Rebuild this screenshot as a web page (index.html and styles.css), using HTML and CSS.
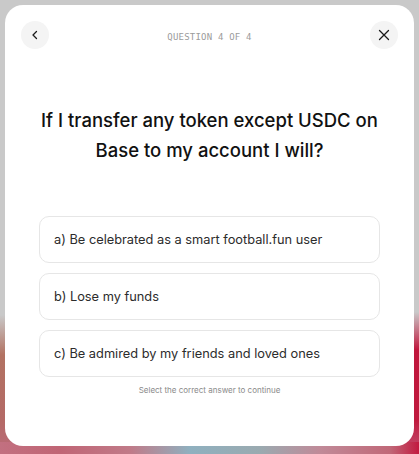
FILE: index.html
```html
<!DOCTYPE html>
<html>
<head>
<meta charset="utf-8">
<link rel="stylesheet" href="styles.css">
</head>
<body>
<div class="card">
  <div class="header">
    <button class="icon-btn" aria-label="Back">
      <svg width="12" height="12" viewBox="0 0 12 12"><path d="M7.5 2.5 L4 6 L7.5 9.5" fill="none" stroke="#1a1a1a" stroke-width="1.3" stroke-linecap="round" stroke-linejoin="round"/></svg>
    </button>
    <div class="step">QUESTION 4 OF 4</div>
    <button class="icon-btn" aria-label="Close">
      <svg width="14" height="14" viewBox="0 0 14 14"><path d="M2.5 2.5 L11.5 11.5 M11.5 2.5 L2.5 11.5" fill="none" stroke="#1a1a1a" stroke-width="1.3" stroke-linecap="round"/></svg>
    </button>
  </div>
  <h1 class="question">If I transfer any token except USDC on Base to my account I will?</h1>
  <div class="options">
    <div class="option">a) Be celebrated as a smart football.fun user</div>
    <div class="option">b) Lose my funds</div>
    <div class="option">c) Be admired by my friends and loved ones</div>
  </div>
  <p class="hint">Select the correct answer to continue</p>
</div>
</body>
</html>
```
FILE: styles.css
```css
html, body {
  margin: 0;
  height: 100%;
}
body {
  padding: 5px;
  box-sizing: border-box;
  background:
    linear-gradient(to right, #c27080 0px, #c06575 60px, #c07a88 130px, #8fb0bf 190px, #9aaab0 260px, #c08a98 320px, #c06878 390px, #c21a40 419px) left bottom / 100% 12px no-repeat,
    linear-gradient(to bottom, #c9c9c9 0px, #c9c9c9 315px, #b27262 355px, #b46a66 420px, #bb6a7a 454px) left top / 30px 100% no-repeat,
    linear-gradient(to bottom, #c9c9c9 0px, #c9c9c9 312px, #c0163c 350px, #c01a3e 420px, #c25070 454px) right top / 30px 100% no-repeat,
    #c9c9c9;
  font-family: Inter, "Noto Sans", sans-serif;
}
.card {
  background: #fff;
  border-radius: 18px;
  height: 441px;
  box-sizing: border-box;
  padding: 16px;
  display: flex;
  flex-direction: column;
}
.header {
  display: flex;
  align-items: center;
  justify-content: space-between;
  height: 28px;
}
.icon-btn {
  width: 28px;
  height: 28px;
  border-radius: 50%;
  border: none;
  background: #f4f4f4;
  padding: 0;
  display: flex;
  align-items: center;
  justify-content: center;
}
.step {
  font-family: "DejaVu Sans Mono", "Liberation Mono", monospace;
  font-size: 9px;
  letter-spacing: 0.2px;
  color: #9b9b9b;
  padding-top: 3px;
}
.question {
  margin: 56px 8px 0;
  font-size: 18.5px;
  line-height: 30px;
  font-weight: 500;
  text-align: center;
  color: #111;
}
.options {
  margin: 51px 18px 0;
  display: flex;
  flex-direction: column;
  gap: 10px;
}
.option {
  height: 47px;
  box-sizing: border-box;
  border: 1px solid #e6e6e6;
  border-radius: 10px;
  padding: 0 14px;
  display: flex;
  align-items: center;
  font-size: 12.8px;
  color: #2c2c2c;
}
.hint {
  margin: 7px 0 0;
  text-align: center;
  font-size: 8px;
  line-height: 12px;
  color: #8a8a8a;
}
```
